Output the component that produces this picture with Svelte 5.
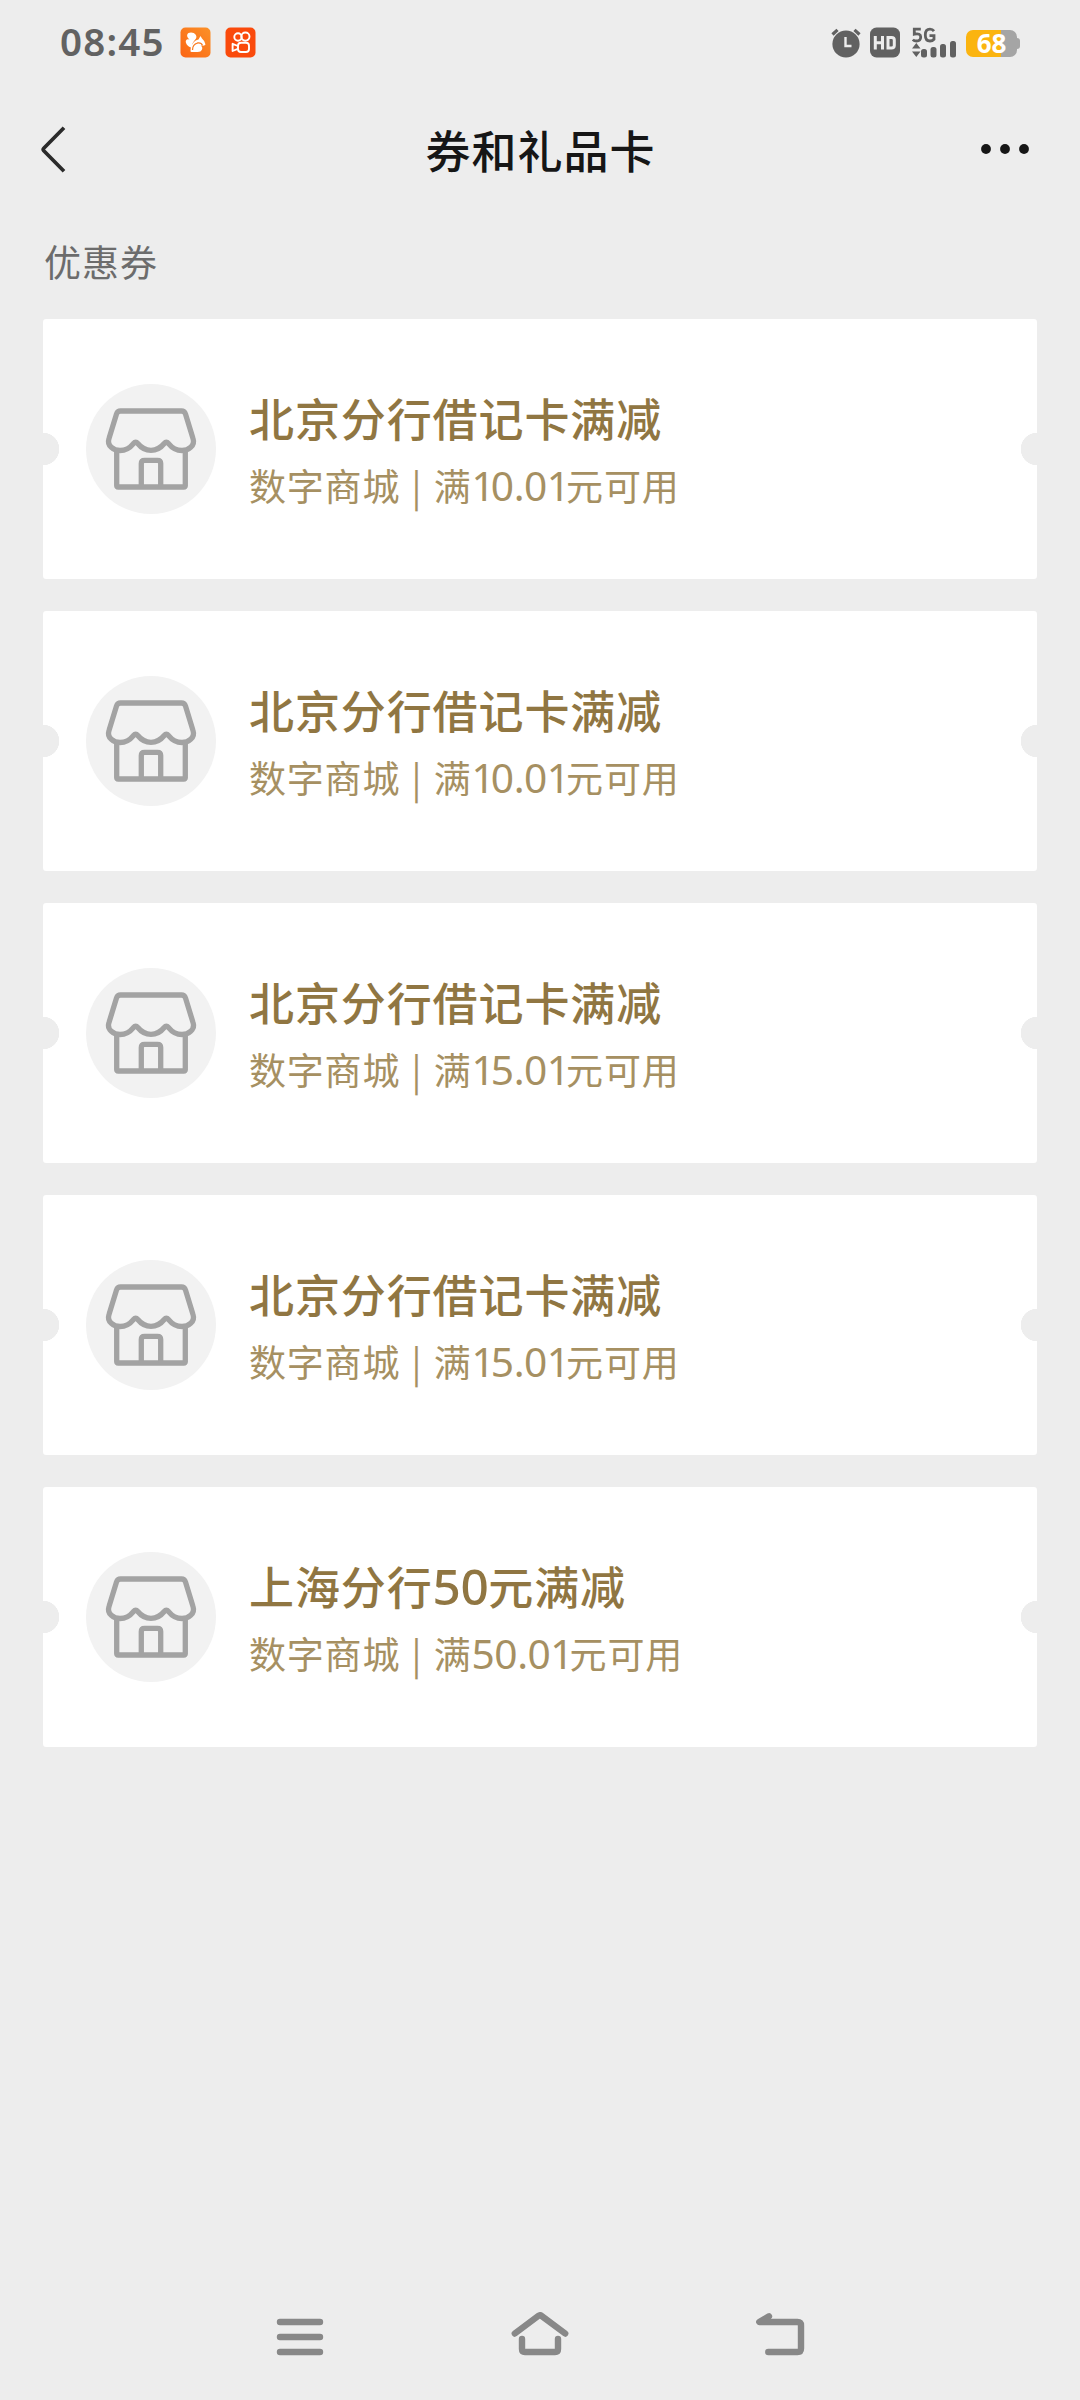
<script>
  const coupons = [
    { title: '北京分行借记卡满减', shop: '数字商城', amount: '10.01' },
    { title: '北京分行借记卡满减', shop: '数字商城', amount: '10.01' },
    { title: '北京分行借记卡满减', shop: '数字商城', amount: '15.01' },
    { title: '北京分行借记卡满减', shop: '数字商城', amount: '15.01' },
    { title: '上海分行50元满减', shop: '数字商城', amount: '50.01' },
  ];

  // Splits a text into runs of digits and runs of other characters.
  const runs = (text) => text.split(/([\d.]+)/).filter(Boolean);
  const isNumber = (run) => /^[\d.]+$/.test(run);
</script>

{#snippet mixed(text)}{#each runs(text) as run}{#if isNumber(run)}<span class="num">{#each run.split('') as d}<span class:one={d === '1'}>{d}</span>{/each}</span>{:else}{run}{/if}{/each}{/snippet}

<div class="screen">
  <div class="status">
    <span class="time">08:45</span>
    <svg class="app" width="31" height="31" viewBox="0 0 31 31">
      <defs>
        <linearGradient id="uc" x1="0" y1="1" x2="1" y2="0">
          <stop offset="0" stop-color="#fb6514" />
          <stop offset="1" stop-color="#fb9128" />
        </linearGradient>
      </defs>
      <rect x=".5" y=".5" width="30" height="30" rx="5" fill="url(#uc)" />
      <path fill="#fff" d="M12 21C7 19.500 5 15.500 6 13.500Q7 11.500 9.500 12.500C5.500 9 7 5.500 11 5.500C15 5.500 17.500 9 16 11.500C14 14.500 11.500 16 12 21Z" />
      <path fill="#fff" d="M10.500 24.500C10.500 17.500 14 13.500 18.500 12.500L20.500 9L22 11.500Q25 14 25.500 17.500Q24 19.500 20.500 18.500Q23 20 22 22.500Q21 25 17.500 25H11.500Z" />
      <path fill="none" stroke="#fb7a1d" stroke-width="1.300" d="M12.500 23Q12.500 17.500 17.500 16Q21.500 15.500 22.500 18.500" />
    </svg>
    <svg class="app second" width="31" height="31" viewBox="0 0 31 31">
      <rect x=".5" y=".5" width="30" height="30" rx="5" fill="#fa4a0c" />
      <g fill="none" stroke="#fff" stroke-width="1.900">
        <circle cx="13" cy="10" r="3.700" />
        <circle cx="20.400" cy="9.600" r="4.100" />
        <rect x="13" y="15.800" width="11" height="9.200" rx="3" />
        <path d="M12.800 19L7.600 16.800V24L12.800 21.800" stroke-linejoin="round" />
      </g>
    </svg>
    <div class="right">
      <svg width="30" height="31" viewBox="0 0 30 31">
        <circle cx="15" cy="17" r="13.600" fill="#616161" />
        <path d="M1.500 7.500L6.500 2.800M28.500 7.500L23.500 2.800" stroke="#616161" stroke-width="3.200" fill="none" />
        <path d="M14.500 10V19H20.500" stroke="#ededed" stroke-width="2.400" fill="none" />
      </svg>
      <svg class="hd" width="30" height="31" viewBox="0 0 30 31">
        <rect y=".5" width="30" height="30" rx="6.500" fill="#616161" />
        <path d="M5.300 9V22.500M12.500 9V22.500M5.300 15.700H12.500M18 10.500H21.500Q24.300 10.500 24.300 13V18.500Q24.300 21 21.500 21H18Z" stroke="#ededed" stroke-width="3" fill="none" />
      </svg>
      <svg class="signal" width="45" height="31" viewBox="0 0 45 31">
        <g fill="none" stroke="#616161" stroke-width="2.800">
          <path d="M8.800 2.200H2.300V7.200Q8.700 5.800 8.700 10Q8.700 14 4.500 14Q2 14 .8 12.500" />
          <path d="M22 4.200Q20.500 2.200 18 2.200Q13.300 2.200 13.300 8Q13.300 14 18 14Q20.500 14 22 12.300V8.600H17.500" />
        </g>
        <path fill="#616161" d="M4.300 16L8.500 21.500H0ZM4.300 30L0 24.500H8.500Z" />
        <g fill="#616161">
          <rect x="9" y="22" width="6" height="8.500" rx="2.500" />
          <rect x="18.500" y="20" width="6" height="10.500" rx="2.500" />
          <rect x="28" y="17" width="6" height="13.500" rx="2.500" />
          <rect x="38" y="14" width="6" height="16.500" rx="2.500" />
        </g>
      </svg>
      <div class="battery"><span>68</span></div>
    </div>
  </div>

  <header>
    <svg width="32" height="52" viewBox="0 0 32 52">
      <path d="M26 4.800L5.800 25.200Q4.600 26.500 5.800 27.800L26 48.200" fill="none" stroke="#2b2b2b" stroke-width="3.700" />
    </svg>
    <h1>券和礼品卡</h1>
    <svg width="50" height="12" viewBox="0 0 50 12" fill="#161616">
      <circle cx="6" cy="6" r="4.900" />
      <circle cx="25" cy="6" r="4.900" />
      <circle cx="44" cy="6" r="4.900" />
    </svg>
  </header>

  <h2>优惠券</h2>

  <main>
    {#each coupons as c}
      <article>
        <div class="avatar">
          <svg width="130" height="130" viewBox="0 0 130 130" fill="none" stroke="#a3a3a3" stroke-width="5.300">
            <path d="M34.500 27H95.500Q98.500 27 99.500 30L107 54.500C109.500 62 102 66.500 96 66.500C88 66.500 84.500 62 82.500 59.500Q80.300 57 78.200 59.500C75 63.500 71 66.300 65 66.300C59 66.300 55 63.500 51.800 59.500Q49.700 57 47.500 59.500C45.500 62 42 66.500 34 66.500C28 66.500 20.500 62 23 54.500L30.500 30Q31.500 27 34.500 27Z" />
            <path d="M30.700 66V101.500Q30.700 103 32.200 103H97.800Q99.300 103 99.300 101.500V66" />
            <path d="M55.300 103V79.500Q55.300 76.300 58.500 76.300H71.500Q74.700 76.300 74.700 79.500V103" />
          </svg>
        </div>
        <div class="info">
          <div class="title">{@render mixed(c.title)}</div>
          <div class="sub">{@render mixed(`${c.shop} | 满${c.amount}元可用`)}</div>
        </div>
      </article>
    {/each}
  </main>

  <nav>
    <svg width="60" height="50" viewBox="0 0 60 50">
      <path d="M10 10H50M10 25H50M10 40H50" />
    </svg>
    <svg width="60" height="50" viewBox="0 0 60 50">
      <path d="M4.800 21.500L28.500 3.800Q30 2.700 31.500 3.800L55.200 21.500M12 27V37Q12 40 15 40H45Q48 40 48 37V27" />
    </svg>
    <svg width="60" height="50" viewBox="0 0 60 50">
      <path d="M19 4.300L9.300 10H47.500Q51 10 51 13.500V36.500Q51 40 47.500 40H18.300" />
    </svg>
  </nav>
</div>

<style>
  :global(body) {
    margin: 0;
    background: #ededed;
  }
  .screen {
    width: 1080px;
    height: 2400px;
    background: #ededed;
    display: flex;
    flex-direction: column;
    font-family: 'Noto Sans CJK SC', sans-serif;
    white-space: nowrap;
  }
  svg {
    display: block;
    flex: none;
  }
  .status {
    height: 84px;
    box-sizing: border-box;
    padding: 0 63px 0 60px;
    display: flex;
    align-items: center;
  }
  .time {
    width: 120px;
    font: 600 38.5px/82px 'Noto Sans', sans-serif;
    letter-spacing: 1.2px;
    height: 84px;
    color: #626262;
  }
  .second {
    margin-left: 14px;
  }
  .right {
    margin-left: auto;
    display: flex;
    align-items: center;
  }
  .hd {
    margin-left: 9px;
  }
  .signal {
    margin-left: 12px;
  }
  .battery {
    position: relative;
    width: 51px;
    height: 27px;
    margin: 2px 0 0 9px;
    border-radius: 7px;
    background: linear-gradient(90deg, #fbb410 0 35px, #a5a5a5 35px);
    text-align: center;
  }
  .battery::after {
    content: '';
    position: absolute;
    right: -3px;
    top: 8px;
    width: 3px;
    height: 11px;
    border-radius: 0 3px 3px 0;
    background: #a5a5a5;
  }
  .battery span {
    display: block;
    font: 700 26px/27px 'Noto Sans', sans-serif;
    color: #fff;
  }
  header {
    height: 130px;
    box-sizing: border-box;
    padding: 0 50px 0 38px;
    display: grid;
    grid-template-columns: 50px 1fr 50px;
    align-items: center;
  }
  h1 {
    margin: 1px 0 0 13px;
    text-align: center;
    font-size: 45px;
    line-height: 66px;
    font-weight: 500;
    letter-spacing: 1px;
    color: #161616;
  }
  h2 {
    margin: 20px 0 0 44px;
    height: 85px;
    font-size: 37px;
    line-height: 54px;
    font-weight: 400;
    letter-spacing: 1px;
    color: #6c6c6c;
  }
  main {
    display: flex;
    flex-direction: column;
    gap: 32px;
    padding: 0 43px;
  }
  article {
    height: 260px;
    box-sizing: border-box;
    padding-left: 43px;
    display: flex;
    align-items: center;
    gap: 33px;
    border-radius: 3px;
    background:
      radial-gradient(circle at 0 50%, #ededed 16px, transparent 16.5px),
      radial-gradient(circle at 100% 50%, #ededed 16px, transparent 16.5px),
      #fff;
  }
  .avatar {
    flex: none;
    border-radius: 50%;
    background: #f2f2f2;
  }
  .info {
    padding-top: 5px;
  }
  .title {
    height: 67px;
    font-size: 45px;
    line-height: 66px;
    font-weight: 500;
    letter-spacing: 0.9px;
    color: #907642;
  }
  .sub {
    height: 66px;
    font-size: 37px;
    line-height: 66px;
    letter-spacing: 0.8px;
    word-spacing: 2.3px;
    color: #a69062;
  }
  .num {
    font-family: 'Noto Sans', sans-serif;
    font-size: 1.1em;
    line-height: 1;
    letter-spacing: -0.5px;
  }
  .one {
    letter-spacing: -4px;
  }
  nav {
    margin-top: auto;
    height: 88px;
    box-sizing: border-box;
    padding: 0 270px 0;
    display: flex;
    justify-content: space-between;
  }
  nav path {
    fill: none;
    stroke: #888;
    stroke-width: 6.4;
    stroke-linecap: round;
    stroke-linejoin: round;
  }
</style>
